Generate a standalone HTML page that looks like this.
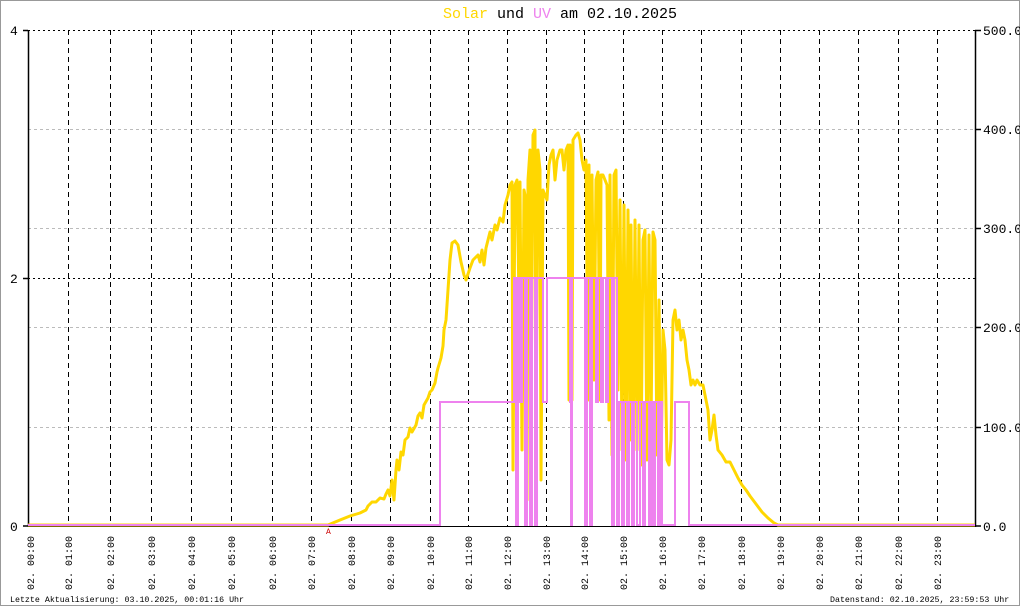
<!DOCTYPE html>
<html><head><meta charset="utf-8"><style>
html,body{margin:0;padding:0;background:#fff}
svg{display:block}
text{font-family:"Liberation Mono",monospace}
</style></head><body>
<svg width="1020" height="606" viewBox="0 0 1020 606" xmlns="http://www.w3.org/2000/svg">
<rect x="0.5" y="0.5" width="1019" height="605" fill="#fff" stroke="#999" stroke-width="1"/>
<text x="443" y="18" font-size="15" fill="#FFD700">Solar</text>
<text x="497" y="18" font-size="15" fill="#000">und</text>
<text x="533" y="18" font-size="15" fill="#EE82EE">UV</text>
<text x="560" y="18" font-size="15" fill="#000">am 02.10.2025</text>
<g stroke="#bbb" stroke-width="1" stroke-dasharray="3,3">
<line x1="28" y1="129.5" x2="975" y2="129.5"/><line x1="28" y1="228.5" x2="975" y2="228.5"/>
<line x1="28" y1="327.5" x2="975" y2="327.5"/><line x1="28" y1="427.5" x2="975" y2="427.5"/>
</g>
<g stroke="#000" stroke-width="1" stroke-dasharray="2,3">
<line x1="28" y1="30.5" x2="975" y2="30.5"/><line x1="28" y1="278.5" x2="975" y2="278.5"/>
</g>
<g stroke="#000" stroke-width="1" stroke-dasharray="5,4">
<line x1="68.5" y1="30" x2="68.5" y2="526"/><line x1="110.5" y1="30" x2="110.5" y2="526"/>
<line x1="151.5" y1="30" x2="151.5" y2="526"/><line x1="191.5" y1="30" x2="191.5" y2="526"/>
<line x1="231.5" y1="30" x2="231.5" y2="526"/><line x1="272.5" y1="30" x2="272.5" y2="526"/>
<line x1="311.5" y1="30" x2="311.5" y2="526"/><line x1="351.5" y1="30" x2="351.5" y2="526"/>
<line x1="390.5" y1="30" x2="390.5" y2="526"/><line x1="430.5" y1="30" x2="430.5" y2="526"/>
<line x1="468.5" y1="30" x2="468.5" y2="526"/><line x1="507.5" y1="30" x2="507.5" y2="526"/>
<line x1="546.5" y1="30" x2="546.5" y2="526"/><line x1="584.5" y1="30" x2="584.5" y2="526"/>
<line x1="623.5" y1="30" x2="623.5" y2="526"/><line x1="662.5" y1="30" x2="662.5" y2="526"/>
<line x1="701.5" y1="30" x2="701.5" y2="526"/><line x1="741.5" y1="30" x2="741.5" y2="526"/>
<line x1="780.5" y1="30" x2="780.5" y2="526"/><line x1="819.5" y1="30" x2="819.5" y2="526"/>
<line x1="858.5" y1="30" x2="858.5" y2="526"/><line x1="898.5" y1="30" x2="898.5" y2="526"/>
<line x1="937.5" y1="30" x2="937.5" y2="526"/>
</g>
<g stroke="#000" stroke-width="1.5">
<line x1="28.5" y1="30" x2="28.5" y2="527"/><line x1="975.5" y1="30" x2="975.5" y2="527"/>
<line x1="23" y1="30.5" x2="28" y2="30.5"/><line x1="23" y1="278.5" x2="28" y2="278.5"/><line x1="23" y1="526" x2="28" y2="526"/>
<line x1="975" y1="30.5" x2="981" y2="30.5"/><line x1="975" y1="129.5" x2="981" y2="129.5"/><line x1="975" y1="228.5" x2="981" y2="228.5"/><line x1="975" y1="327.5" x2="981" y2="327.5"/><line x1="975" y1="427.5" x2="981" y2="427.5"/><line x1="975" y1="526" x2="981" y2="526"/>
</g>
<line x1="28" y1="526.5" x2="975" y2="526.5" stroke="#000" stroke-width="1"/>
<g font-size="13" fill="#000">
<text x="10" y="35">4</text><text x="10" y="283">2</text><text x="10" y="531">0</text>
<text x="983" y="35">500.0</text><text x="983" y="134">400.0</text><text x="983" y="233">300.0</text>
<text x="983" y="332">200.0</text><text x="983" y="432">100.0</text><text x="983" y="531">0.0</text>
</g>
<path fill="none" stroke="#FFD700" stroke-width="3" stroke-linejoin="round" d="M28,525 H328 L340,520 350,516 360,513 366,510 368,506 372,502 376,502 380,498 384,499 386,494 388,490 390,496 392,480 394,500 396,470 397,460 399,470 401,452 403,455 405,440 408,437 410,428 412,432 416,425 418,416 420,413 422,418 424,405 428,398 430,392 432,390 435,383 437,372 438,368 441,358 443,346 444,330 446,320 448,290 450,260 452,243 455,241 458,245 461,262 464,275 466,280 470,268 473,260 478,255 480,262 482,250 484,265 486,248 490,232 492,240 495,225 497,230 500,218 503,222 505,205 508,195 510,185 512,182 513,470 515,185 517,180 519,300 520,182 522,450 524,190 526,200 527,500 528,180 530,150 531,420 533,135 535,130 536,440 538,150 540,170 541,480 543,190 545,195 547,200 549,165 551,155 553,150 555,180 557,160 560,150 562,150 564,170 566,150 568,145 569,400 570,145 572,400 573,140 576,135 578,133 580,140 582,160 584,170 586,160 588,400 589,165 591,450 592,175 594,380 596,180 598,172 600,400 601,175 603,175 605,180 607,185 609,420 610,175 612,455 614,175 616,170 618,390 620,200 622,450 624,205 626,460 628,210 630,440 631,225 633,460 635,220 637,450 639,225 641,465 643,240 645,230 647,460 649,235 651,430 653,232 655,240 657,455 659,300 661,470 663,330 665,350 667,460 669,465 671,440 673,320 675,310 677,330 679,320 681,340 683,330 685,340 687,360 689,370 691,385 693,380 695,385 697,380 700,385 703,385 706,400 708,410 710,440 712,430 714,415 716,435 718,450 722,455 726,462 730,462 734,470 738,478 742,485 746,490 750,496 756,504 762,512 768,518 774,523 778,525 H975"/>
<path fill="none" stroke="#EE82EE" stroke-width="2" d="M28,525 H440 V402 H514 V278 H516 V525 H518 V278 H520 V402 H522 V278 H525 V525 H527 V278 H530 V525 H532 V278 H535 V525 H537 V278 H543 V402 H547 V278 H570 V402 H571 V525 H572 V278 H585 V525 H587 V278 H590 V525 H592 V278 H596 V402 H598 V278 H601 V402 H603 V278 H606 V402 H608 V278 H612 V525 H614 V278 H617 V525 H619 V402 H622 V525 H624 V402 H627 V525 H629 V402 H632 V525 H634 V402 H637 V525 H640 V402 H643 V525 H645 V402 H649 V525 H651 V402 H653 V525 H655 V402 H658 V525 H660 V402 H662 V525 H675 V402 H689 V525 H975"/>
<text x="326" y="534" font-size="8" fill="#c00">A</text>
<g font-size="10" fill="#000">
<text transform="translate(34,590) rotate(-90)">02. 00:00</text>
<text transform="translate(72,590) rotate(-90)">02. 01:00</text>
<text transform="translate(114,590) rotate(-90)">02. 02:00</text>
<text transform="translate(155,590) rotate(-90)">02. 03:00</text>
<text transform="translate(195,590) rotate(-90)">02. 04:00</text>
<text transform="translate(235,590) rotate(-90)">02. 05:00</text>
<text transform="translate(276,590) rotate(-90)">02. 06:00</text>
<text transform="translate(315,590) rotate(-90)">02. 07:00</text>
<text transform="translate(355,590) rotate(-90)">02. 08:00</text>
<text transform="translate(394,590) rotate(-90)">02. 09:00</text>
<text transform="translate(434,590) rotate(-90)">02. 10:00</text>
<text transform="translate(472,590) rotate(-90)">02. 11:00</text>
<text transform="translate(511,590) rotate(-90)">02. 12:00</text>
<text transform="translate(550,590) rotate(-90)">02. 13:00</text>
<text transform="translate(588,590) rotate(-90)">02. 14:00</text>
<text transform="translate(627,590) rotate(-90)">02. 15:00</text>
<text transform="translate(666,590) rotate(-90)">02. 16:00</text>
<text transform="translate(705,590) rotate(-90)">02. 17:00</text>
<text transform="translate(745,590) rotate(-90)">02. 18:00</text>
<text transform="translate(784,590) rotate(-90)">02. 19:00</text>
<text transform="translate(823,590) rotate(-90)">02. 20:00</text>
<text transform="translate(862,590) rotate(-90)">02. 21:00</text>
<text transform="translate(902,590) rotate(-90)">02. 22:00</text>
<text transform="translate(941,590) rotate(-90)">02. 23:00</text>
</g>
<text x="10" y="602" font-size="8.3" fill="#000">Letzte Aktualisierung: 03.10.2025, 00:01:16 Uhr</text>
<text x="830" y="602" font-size="8.3" fill="#000">Datenstand: 02.10.2025, 23:59:53 Uhr</text>
</svg>
</body></html>
